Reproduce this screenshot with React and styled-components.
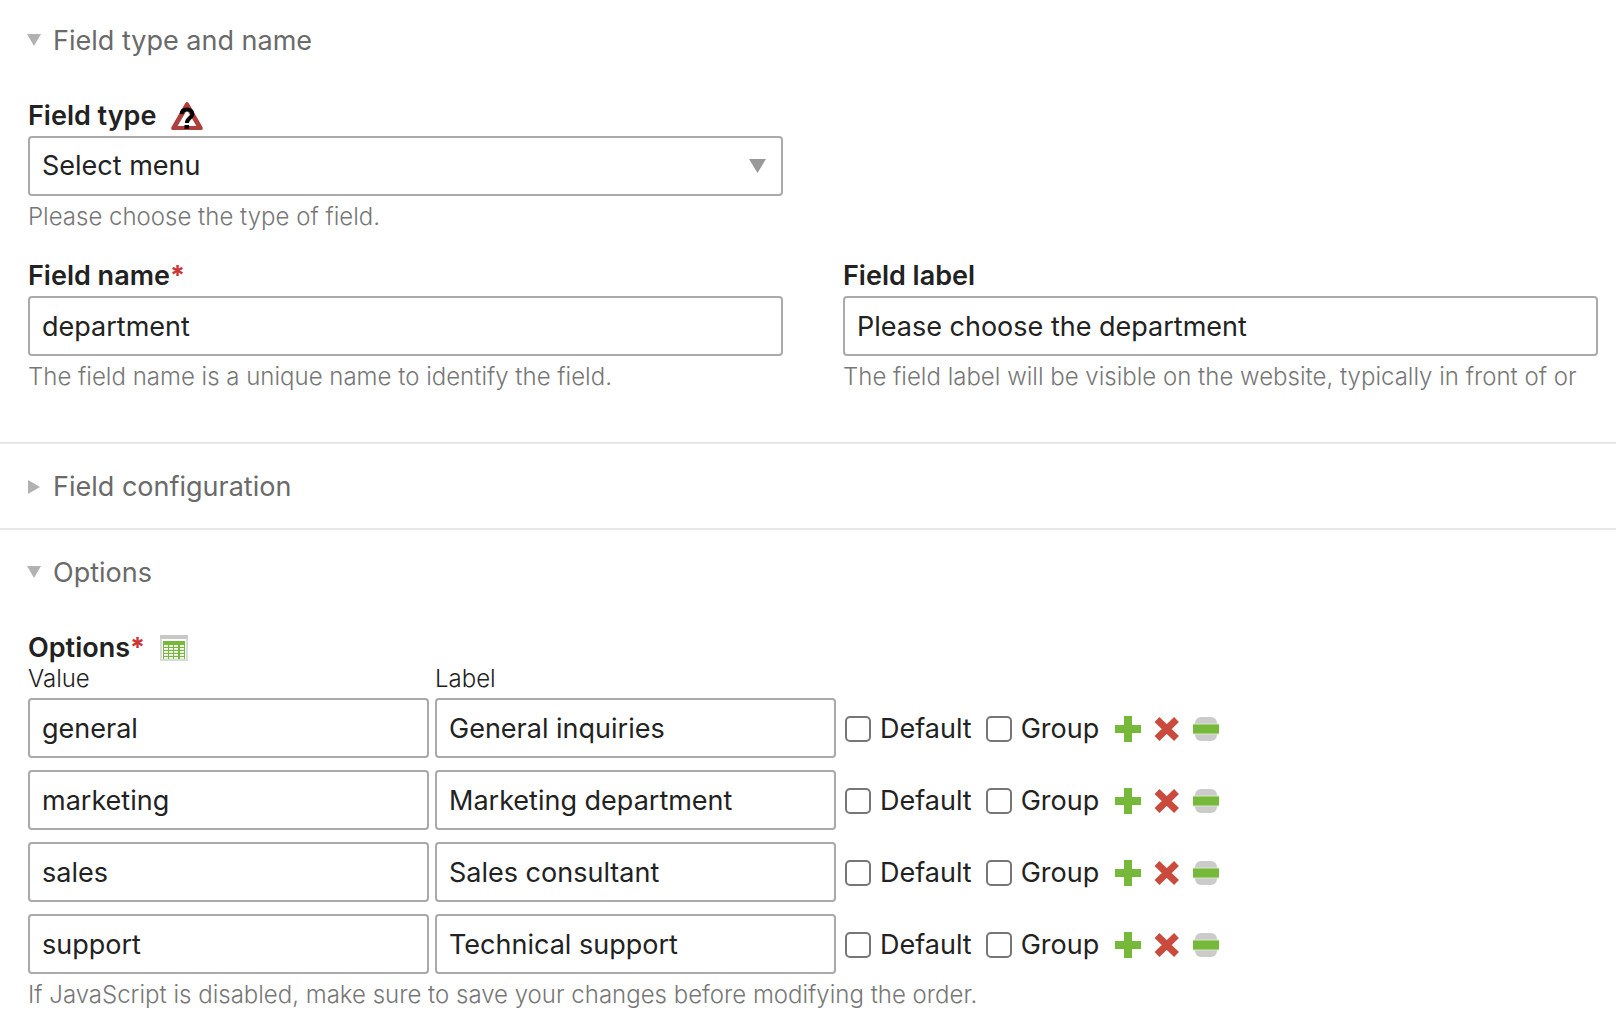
import React, { useId, useState } from "react";
import styled, { createGlobalStyle } from "styled-components";

const GlobalStyle = createGlobalStyle`
  *, *::before, *::after { box-sizing: border-box; }
  body {
    margin: 0;
    background: #fff;
    color: #222;
    font-family: Inter, "Liberation Sans", sans-serif;
    font-size: 27px;
    font-weight: 400;
    line-height: 34px;
  }
`;

const Form = styled.form`
  overflow: hidden;
`;

const Section = styled.section`
  padding: 0 18px 0 28px;
  border-top: ${(p) => (p.$first ? "0" : "2px solid #e6e6e6")};
  padding-bottom: ${(p) => (p.$open ? "50px" : "0")};
`;

const Legend = styled.h2`
  margin: 0;
  font: inherit;
  padding: ${(p) => (p.$first ? "24px" : "26px")} 0 24px;
`;

const Toggle = styled.button`
  display: flex;
  align-items: center;
  gap: 12px;
  padding: 0;
  border: 0;
  background: none;
  font: inherit;
  color: #6a6a6a;
  cursor: pointer;
`;

const Marker = styled.svg`
  flex: none;
  width: 14px;
  height: 14px;
  margin-left: -1px;
  fill: #b2b2b2;
`;

const Columns = styled.div`
  display: grid;
  grid-template-columns: 1fr 1fr;
  column-gap: 60px;
  row-gap: 27px;
  padding-top: 17px;
`;

const OptionGroup = styled.div`
  padding-top: 17px;
`;

const Field = styled.div`
  grid-column-start: ${(p) => (p.$start ? 1 : "auto")};
  min-width: 0;
`;

const LabelRow = styled.div`
  display: flex;
  align-items: center;
  gap: 15px;
  height: ${(p) => (p.$tight ? "33px" : "34px")};
  margin-bottom: ${(p) => (p.$tight ? "0" : "3px")};
  font-weight: 600;
`;

const Required = styled.span`
  color: #cc3333;
  font-weight: 700;
`;

const IconButton = styled.button`
  display: flex;
  padding: 0;
  border: 0;
  background: none;
  cursor: pointer;
`;

const Input = styled.input`
  display: block;
  width: 100%;
  height: 60px;
  padding: 0 12px;
  border: 2px solid #aaa;
  border-radius: 4px;
  background: #fff;
  color: #222;
  font: inherit;
`;

const SelectBox = styled.div`
  display: grid;
  align-items: center;

  > * { grid-area: 1 / 1; }
`;

const Select = styled(Input)`
  appearance: none;
`;

const SelectArrow = styled.svg`
  justify-self: end;
  margin-right: 17px;
  width: 17px;
  height: 14px;
  fill: #999;
  pointer-events: none;
`;

const Help = styled.p`
  margin: 6px 0 0;
  height: 30px;
  line-height: 30px;
  font-size: 24px;
  font-weight: 300;
  color: #777;
  white-space: nowrap;
  overflow: hidden;
`;

const OptionTable = styled.table`
  width: 100%;
  border-collapse: collapse;
  table-layout: fixed;
`;

const HeadCell = styled.th`
  width: ${(p) => (p.$wide ? "auto" : "407px")};
  padding: 0 0 4px;
  text-align: left;
  font-size: 24px;
  font-weight: 300;
  line-height: 30px;
`;

const Cell = styled.td`
  padding: 0 6px ${(p) => (p.$last ? "0" : "12px")} 0;
`;

const Controls = styled.div`
  display: flex;
  align-items: center;
  gap: 14px;
  padding: 2px 0 0 3px;
`;

const Check = styled.label`
  display: flex;
  align-items: center;
  gap: 9px;
`;

const CheckBox = styled.input`
  appearance: none;
  width: 26px;
  height: 26px;
  margin: 0;
  border: 2px solid #767676;
  border-radius: 5px;
  background: #fff;

  &:checked { background: #767676; }
`;

const Actions = styled.div`
  display: flex;
  gap: 13px;
  margin-left: 2px;
`;

function HelpIcon() {
  return (
    <svg width="32" height="28" viewBox="0 0 32 28" aria-hidden="true">
      <path fillRule="evenodd" fill="#ad3f3c" d="M14.2 1.2Q16-1 17.8 1.2L31.6 25.2Q32.4 28 30 28H2Q-.4 28 .4 25.2ZM16 8 6.6 24H25.4Z" />
      <path d="M10.6 12.2C10.8 8.6 12.8 7.6 16 7.6S21.4 9.2 21.4 12C21.4 15.6 15.9 16 15.9 21" fill="none" stroke="#000" strokeWidth="4" />
      <rect x="13.5" y="23" width="4.6" height="4" />
    </svg>
  );
}

function TableIcon() {
  return (
    <svg width="28" height="26" viewBox="0 0 28 26" aria-hidden="true">
      <rect width="28" height="26" fill="#d9d9d9" />
      <rect width="28" height="4" fill="#c8c8c8" />
      <rect x="2" y="4" width="24" height="20" fill="#fff" />
      <rect x="3" y="6" width="22" height="18" fill="#76b83a" />
      <g fill="#fff">
        {[10, 13, 16, 19, 22].map((y) =>
          [4, 9, 14, 20].map((x) => (
            <rect key={`${x}-${y}`} x={x} y={y} width="4" height="1.8" />
          ))
        )}
      </g>
    </svg>
  );
}

function AddIcon() {
  return (
    <svg width="26" height="26" viewBox="0 0 26 26" aria-hidden="true">
      <path fill="#76b83a" d="M9 0H17V9H26V17H17V26H9V17H0V9H9Z" />
    </svg>
  );
}

function DeleteIcon() {
  return (
    <svg width="26" height="26" viewBox="0 0 26 26" aria-hidden="true">
      <path stroke="#cb4a3e" strokeWidth="7" d="M3 3.5 22.5 22.5M22.5 3.5 3 22.5" />
    </svg>
  );
}

function DragIcon() {
  return (
    <svg width="26" height="26" viewBox="0 0 26 26" aria-hidden="true">
      <rect x="2" y="1" width="22" height="24" rx="6" fill="#cbcbcb" />
      <rect y="7.5" width="26" height="11" fill="#d5e9c3" />
      <rect y="8.5" width="26" height="9" fill="#76b83a" />
    </svg>
  );
}

function Fold({ title, first, initiallyOpen, children }) {
  const [open, setOpen] = useState(initiallyOpen);
  return (
    <Section $first={first} $open={open}>
      <Legend $first={first}>
        <Toggle type="button" aria-expanded={open} onClick={() => setOpen(!open)}>
          <Marker viewBox="0 0 14 14" aria-hidden="true">
            <path d={open ? "M0 0H14L7 12Z" : "M1 0V14L13 7Z"} />
          </Marker>
          {title}
        </Toggle>
      </Legend>
      {open && children}
    </Section>
  );
}

function TextField({ label, value, help, required, start }) {
  const id = useId();
  return (
    <Field $start={start}>
      <LabelRow>
        <label htmlFor={id}>
          {label}
          {required && <Required>*</Required>}
        </label>
      </LabelRow>
      <Input id={id} type="text" defaultValue={value} />
      <Help>{help}</Help>
    </Field>
  );
}

const options = [
  ["general", "General inquiries"],
  ["marketing", "Marketing department"],
  ["sales", "Sales consultant"],
  ["support", "Technical support"],
];

export default function App() {
  return (
    <Form>
      <GlobalStyle />
      <Fold title="Field type and name" first initiallyOpen>
        <Columns>
          <Field>
            <LabelRow>
              <label htmlFor="field-type">Field type</label>
              <IconButton type="button" aria-label="Help">
                <HelpIcon />
              </IconButton>
            </LabelRow>
            <SelectBox>
              <Select as="select" id="field-type">
                <option>Select menu</option>
              </Select>
              <SelectArrow viewBox="0 0 17 14" aria-hidden="true">
                <path d="M0 0H17L8.5 14Z" />
              </SelectArrow>
            </SelectBox>
            <Help>Please choose the type of field.</Help>
          </Field>
          <TextField
            start
            required
            label="Field name"
            value="department"
            help="The field name is a unique name to identify the field."
          />
          <TextField
            label="Field label"
            value="Please choose the department"
            help="The field label will be visible on the website, typically in front of or"
          />
        </Columns>
      </Fold>
      <Fold title="Field configuration" initiallyOpen={false} />
      <Fold title="Options" initiallyOpen>
        <OptionGroup>
          <LabelRow $tight>
            <span>
              Options<Required>*</Required>
            </span>
            <IconButton type="button" aria-label="Import options">
              <TableIcon />
            </IconButton>
          </LabelRow>
          <OptionTable>
            <thead>
              <tr>
                <HeadCell>Value</HeadCell>
                <HeadCell>Label</HeadCell>
                <HeadCell $wide aria-label="Settings" />
              </tr>
            </thead>
            <tbody>
              {options.map(([value, label], i) => {
                const last = i === options.length - 1;
                return (
                  <tr key={value}>
                    <Cell $last={last}>
                      <Input type="text" aria-label="Value" defaultValue={value} />
                    </Cell>
                    <Cell $last={last}>
                      <Input type="text" aria-label="Label" defaultValue={label} />
                    </Cell>
                    <Cell $last={last}>
                      <Controls>
                        <Check>
                          <CheckBox type="checkbox" />
                          Default
                        </Check>
                        <Check>
                          <CheckBox type="checkbox" />
                          Group
                        </Check>
                        <Actions>
                          <IconButton type="button" aria-label="Add"><AddIcon /></IconButton>
                          <IconButton type="button" aria-label="Delete"><DeleteIcon /></IconButton>
                          <IconButton type="button" aria-label="Move"><DragIcon /></IconButton>
                        </Actions>
                      </Controls>
                    </Cell>
                  </tr>
                );
              })}
            </tbody>
          </OptionTable>
          <Help>If JavaScript is disabled, make sure to save your changes before modifying the order.</Help>
        </OptionGroup>
      </Fold>
    </Form>
  );
}
